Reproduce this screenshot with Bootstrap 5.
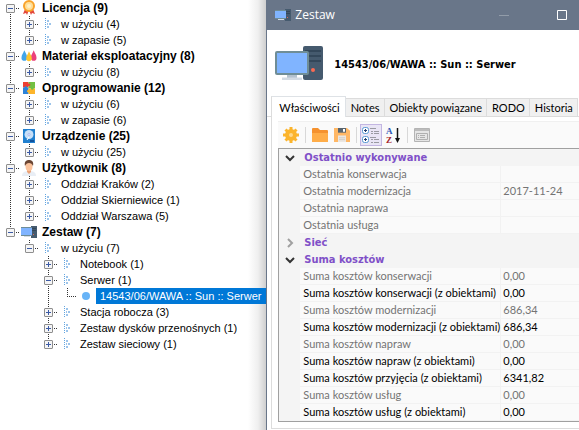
<!DOCTYPE html>
<html lang="pl">
<head>
<meta charset="utf-8">
<meta name="viewport" content="width=device-width, initial-scale=1">
<title>Zestaw</title>
<link href="https://cdn.jsdelivr.net/npm/bootstrap@5.3.0/dist/css/bootstrap.min.css" rel="stylesheet">
<style>
  body { font-family: Lato, "Noto Sans", sans-serif; font-size: 11px; line-height: 16px; color: #000; }
  button { color: inherit; }

  /* tree */
  .tree-pane { flex: 0 0 46%; font-family: "Liberation Sans", Arial, sans-serif; background: linear-gradient(to left, #cfcfcf, #efefef 8px, #fff 18px); }
  .tree-row { display: flex; height: 16px; padding-left: 1px; white-space: nowrap; }
  .tree-group { font-size: 12px; font-weight: 700; }
  .rail { flex: 0 0 19px; display: flex; align-items: center; justify-content: center; background-repeat: no-repeat;
    --v: repeating-linear-gradient(to bottom, #333 0 1px, transparent 1px 2px);
    --h: repeating-linear-gradient(to right, #333 0 1px, transparent 1px 2px); }
  .rail-v { background-image: var(--v); background-size: 1px 100%; background-position: 9px 0; }
  .rail-t { background-image: var(--v), var(--h); background-size: 1px 100%, 10px 1px; background-position: 9px 0, 9px 8px; }
  .rail-l { background-image: var(--v), var(--h); background-size: 1px 8px, 10px 1px; background-position: 9px 0, 9px 8px; }
  .rail-f { background-image: var(--v), var(--h); background-size: 1px 8px, 10px 1px; background-position: 9px 8px, 9px 8px; }
  .toggler { width: 9px; height: 9px; padding: 0; border: 1px solid #8e8e8e; border-radius: 1px; margin-top: 1px;
    background: linear-gradient(#3b5aa5, #3b5aa5) center / 5px 1px no-repeat, #f5f5f5; }
  .toggler[aria-expanded="false"] { background: linear-gradient(#3b5aa5, #3b5aa5) center / 5px 1px no-repeat, linear-gradient(#3b5aa5, #3b5aa5) center / 1px 5px no-repeat, #f5f5f5; }
  .glyph { flex: 0 0 18px; height: 16px; display: flex; align-items: center; justify-content: center; }
  .tree-text { padding-left: 4px; }
  .tree-text.chosen { flex: 1 1 auto; background: #0078d7; color: #fff; margin-left: 1px; overflow: hidden; }

  /* window */
  .win { flex: 1 1 0; min-width: 0; border-left: 1px solid #697689; background: #fff; overflow: hidden; }
  .win-title { background: #697689; color: #fff; height: 30px; padding: 0 12px 0 8px; font: 12px/30px "Open Sans", "Noto Sans", sans-serif; }
  .win-btn { border: 0; padding: 0; background: none; display: flex; }
  .win-head { height: 66px; padding-left: 8px; gap: 11px; }
  .win-head h1 { font: 700 11px/16px "DejaVu Sans Condensed", "DejaVu Sans", sans-serif; margin: 0; padding-top: 4px; white-space: nowrap; }
  .tabs { padding-left: 4px; flex-wrap: nowrap; align-items: flex-end; border-bottom: 1px solid #dcdcdc; height: 21px; }
  .tabs .nav-link { font-size: 11px; line-height: 16px; padding: 1px 4px 0 5px; height: 18px; color: #000; background: #f0f0f0; border: 1px solid #dcdcdc; border-left: 0; border-bottom: 0; border-radius: 0; margin: 0; white-space: nowrap; }
  .tabs .nav-link.active { height: 21px; padding: 2px 5px 0 7px; background: #fff; border-left: 1px solid #dcdcdc; margin-bottom: -1px; }
  .tab-body { margin-left: 4px; border-left: 1px solid #dcdcdc; border-bottom: 1px solid #dcdcdc; padding: 4px 0 6px 6px; }
  .tools { height: 27px; background: #fafafa; border-top: 1px solid #f0f0f0; padding-left: 2px; }
  .tool { border: 1px solid transparent; background: none; padding: 0; width: 22px; height: 22px; display: flex; align-items: center; justify-content: center; }
  .tool.on { background: #e9e5f5; border-color: #c3b6e2; }
  .bar { width: 1px; height: 16px; background: #d8d8d8; margin: 0 3px; }

  /* properties */
  .props { width: 100%; table-layout: fixed; border: 1px solid #a0a0a0; border-right: 0; background: #fafafa; border-collapse: separate; border-spacing: 0; }
  .props th, .props td { height: 17px; padding: 0 0 0 3px; line-height: 16px; border-bottom: 1px solid #f2f2f2; font-weight: 400; white-space: nowrap; }
  .props td { padding-left: 2px; border-left: 1px solid #f2f2f2; }
  .props .edge { background: #f4f4f4; border: 0; padding: 0; }
  .props .sect th { background: #f4f4f4; color: #8050c8; font-weight: 700; font-family: "DejaVu Sans Condensed", "DejaVu Sans", sans-serif; padding: 1px 0 0 4px; border: 0; }
  .props .edge button { border: 0; padding: 0; background: none; display: flex; margin: 0 auto; }
  .ro { color: #747474; }
</style>
<script src="https://cdn.jsdelivr.net/npm/bootstrap@5.3.0/dist/js/bootstrap.bundle.min.js"></script>
</head>
<body>
<svg width="0" height="0" class="d-none" aria-hidden="true">
  <symbol id="branch" viewBox="0 0 8 14"><path fill="#62a5e0" d="M1 1h1v1H1zM1 3h1v1H1zM1 5h1v1H1zM1 7h1v1H1zM1 9h1v1H1zM1 11h1v1H1z"/><path fill="#9cc4ea" d="M3 3h2v2H3zM3 9h2v2H3zM3 6h1v2H3zM5 6h2v2H5z"/></symbol>
  <symbol id="pc" viewBox="0 0 48 34"><rect x="28" width="20" height="34" rx="2" fill="#455a6e"/><path fill="#33475a" d="M30 4h16v2H30zM30 9h16v2H30zM30 14h16v2H30z"/><rect y="5" width="34" height="24" rx="2" fill="#6f8d96"/><rect x="2" y="7" width="30" height="20" fill="#80b4ff"/><path fill="#b4c2cf" d="M12 29h10v3H12z"/><path fill="#d3dbe4" d="M7 31.500h20V34H7z"/><circle cx="38" cy="24" r="2" fill="#fb6a52"/></symbol>
  <symbol id="pc-mini" viewBox="0 0 16 12"><path fill="#455a6e" d="M10 0h6v12h-6z"/><path fill="#33475a" d="M11 2h4v1h-4zM11 4h4v1h-4z"/><path fill="#6f8d96" d="M0 1h11v9H0z"/><path fill="#80b4ff" d="M0 2h11v7H0z"/><path fill="#d3dbe4" d="M3 10h6v1H3z"/><path fill="#d9695c" d="M12 8h1v1h-1z"/></symbol>
</svg>

<main class="d-flex min-vh-100 overflow-hidden">
  <nav class="tree-pane" aria-label="Drzewo zasobów">
    <div class="tree-row tree-group"><span class="rail rail-f"><button class="toggler" aria-expanded="true" aria-label="Licencja"></button></span><span class="glyph"><svg width="14" height="16" viewBox="0 0 14 16"><path d="M3 9 1 14l3-1 1 2 2-5 2 5 1-2 3 1-2-5z" fill="#e2473c"/><circle cx="7" cy="6" r="5" fill="#ffdf98" stroke="#f9a32b" stroke-width="2"/><circle cx="7" cy="6" r="2" fill="#fff0c6"/></svg></span><span class="tree-text">Licencja (9)</span></div>
    <div class="tree-row"><span class="rail rail-v"></span><span class="rail rail-t"><button class="toggler" aria-expanded="false" aria-label="w użyciu"></button></span><span class="glyph"><svg width="8" height="14"><use href="#branch"/></svg></span><span class="tree-text">w użyciu (4)</span></div>
    <div class="tree-row"><span class="rail rail-v"></span><span class="rail rail-l"><button class="toggler" aria-expanded="false" aria-label="w zapasie"></button></span><span class="glyph"><svg width="8" height="14"><use href="#branch"/></svg></span><span class="tree-text">w zapasie (5)</span></div>
    <div class="tree-row tree-group"><span class="rail rail-t"><button class="toggler" aria-expanded="true" aria-label="Materiał eksploatacyjny"></button></span><span class="glyph"><svg width="16" height="12" viewBox="0 0 17 12"><path d="M3.500 0C5 3 6.500 5 6.500 8a3 3 0 0 1-6 0c0-3 2-5 3-8z" fill="#42a5ea"/><path d="M13.500 0c1 3 3 5 3 8a3 3 0 0 1-6 0c0-3 2-5 3-8z" fill="#ec407a"/><path d="M8.500 1c1 3 3 5 3 7.500a3 3 0 0 1-6 0C5.500 6 7.500 4 8.500 1z" fill="#fdc52f"/></svg></span><span class="tree-text">Materiał eksploatacyjny (8)</span></div>
    <div class="tree-row"><span class="rail rail-v"></span><span class="rail rail-l"><button class="toggler" aria-expanded="false" aria-label="w użyciu"></button></span><span class="glyph"><svg width="8" height="14"><use href="#branch"/></svg></span><span class="tree-text">w użyciu (8)</span></div>
    <div class="tree-row tree-group"><span class="rail rail-t"><button class="toggler" aria-expanded="true" aria-label="Oprogramowanie"></button></span><span class="glyph"><svg width="12" height="12" viewBox="0 0 13 13"><path fill="#ed3f32" d="M0 0h6v6H0z"/><path fill="#72c043" d="M6 0h7v7H6z"/><path fill="#2c83d9" d="M0 6h6v7H0z"/><path fill="#fdb52b" d="M6 7h7v6H6z"/><circle cx="6.500" cy="3" r="1.500" fill="#ed3f32"/><circle cx="10" cy="7" r="1.500" fill="#72c043"/><circle cx="6" cy="10" r="1.500" fill="#fdb52b"/><circle cx="3" cy="6" r="1.500" fill="#2c83d9"/></svg></span><span class="tree-text">Oprogramowanie (12)</span></div>
    <div class="tree-row"><span class="rail rail-v"></span><span class="rail rail-t"><button class="toggler" aria-expanded="false" aria-label="w użyciu"></button></span><span class="glyph"><svg width="8" height="14"><use href="#branch"/></svg></span><span class="tree-text">w użyciu (6)</span></div>
    <div class="tree-row"><span class="rail rail-v"></span><span class="rail rail-l"><button class="toggler" aria-expanded="false" aria-label="w zapasie"></button></span><span class="glyph"><svg width="8" height="14"><use href="#branch"/></svg></span><span class="tree-text">w zapasie (6)</span></div>
    <div class="tree-row tree-group"><span class="rail rail-t"><button class="toggler" aria-expanded="true" aria-label="Urządzenie"></button></span><span class="glyph"><svg width="12" height="14" viewBox="0 0 12 14"><rect width="12" height="14" fill="#2180cf"/><circle cx="6" cy="5.500" r="4.500" fill="#c8e0f8"/><circle cx="6" cy="5.500" r="1" fill="#fff" stroke="#a9b5ee"/><path d="M4 11 6 8" stroke="#fff"/><path fill="#10529b" d="M7 11h4v2H7z"/></svg></span><span class="tree-text">Urządzenie (25)</span></div>
    <div class="tree-row"><span class="rail rail-v"></span><span class="rail rail-l"><button class="toggler" aria-expanded="false" aria-label="w użyciu"></button></span><span class="glyph"><svg width="8" height="14"><use href="#branch"/></svg></span><span class="tree-text">w użyciu (25)</span></div>
    <div class="tree-row tree-group"><span class="rail rail-t"><button class="toggler" aria-expanded="true" aria-label="Użytkownik"></button></span><span class="glyph"><svg width="14" height="16" viewBox="0 0 14 16"><path d="M0 16c0-4 3-5 7-5s7 1 7 5z" fill="#e9eef5"/><path d="M5 9h4v3l-2 2-2-2z" fill="#eba276"/><ellipse cx="7" cy="6.500" rx="3.500" ry="4.500" fill="#fbc29b"/><path d="M3 6c-1-4 1-6 4-6s5 2 4 6c-1-2-2-3-4-3S4 4 3 6z" fill="#6b4532"/></svg></span><span class="tree-text">Użytkownik (8)</span></div>
    <div class="tree-row"><span class="rail rail-v"></span><span class="rail rail-t"><button class="toggler" aria-expanded="false" aria-label="Oddział Kraków"></button></span><span class="glyph"><svg width="8" height="14"><use href="#branch"/></svg></span><span class="tree-text">Oddział Kraków (2)</span></div>
    <div class="tree-row"><span class="rail rail-v"></span><span class="rail rail-t"><button class="toggler" aria-expanded="false" aria-label="Oddział Skierniewice"></button></span><span class="glyph"><svg width="8" height="14"><use href="#branch"/></svg></span><span class="tree-text">Oddział Skierniewice (1)</span></div>
    <div class="tree-row"><span class="rail rail-v"></span><span class="rail rail-l"><button class="toggler" aria-expanded="false" aria-label="Oddział Warszawa"></button></span><span class="glyph"><svg width="8" height="14"><use href="#branch"/></svg></span><span class="tree-text">Oddział Warszawa (5)</span></div>
    <div class="tree-row tree-group"><span class="rail rail-l"><button class="toggler" aria-expanded="true" aria-label="Zestaw"></button></span><span class="glyph"><svg width="16" height="12"><use href="#pc-mini"/></svg></span><span class="tree-text">Zestaw (7)</span></div>
    <div class="tree-row"><span class="rail"></span><span class="rail rail-l"><button class="toggler" aria-expanded="true" aria-label="w użyciu"></button></span><span class="glyph"><svg width="8" height="14"><use href="#branch"/></svg></span><span class="tree-text">w użyciu (7)</span></div>
    <div class="tree-row"><span class="rail"></span><span class="rail"></span><span class="rail rail-t"><button class="toggler" aria-expanded="false" aria-label="Notebook"></button></span><span class="glyph"><svg width="8" height="14"><use href="#branch"/></svg></span><span class="tree-text">Notebook (1)</span></div>
    <div class="tree-row"><span class="rail"></span><span class="rail"></span><span class="rail rail-t"><button class="toggler" aria-expanded="true" aria-label="Serwer"></button></span><span class="glyph"><svg width="8" height="14"><use href="#branch"/></svg></span><span class="tree-text">Serwer (1)</span></div>
    <div class="tree-row"><span class="rail"></span><span class="rail"></span><span class="rail rail-v"></span><span class="rail rail-l"></span><span class="glyph"><svg width="8" height="8" viewBox="0 0 8 8"><circle cx="4" cy="4" r="4" fill="#68b4f7"/></svg></span><span class="tree-text chosen">14543/06/WAWA :: Sun :: Serwer</span></div>
    <div class="tree-row"><span class="rail"></span><span class="rail"></span><span class="rail rail-t"><button class="toggler" aria-expanded="false" aria-label="Stacja robocza"></button></span><span class="glyph"><svg width="8" height="14"><use href="#branch"/></svg></span><span class="tree-text">Stacja robocza (3)</span></div>
    <div class="tree-row"><span class="rail"></span><span class="rail"></span><span class="rail rail-t"><button class="toggler" aria-expanded="false" aria-label="Zestaw dysków przenośnych"></button></span><span class="glyph"><svg width="8" height="14"><use href="#branch"/></svg></span><span class="tree-text">Zestaw dysków przenośnych (1)</span></div>
    <div class="tree-row"><span class="rail"></span><span class="rail"></span><span class="rail rail-l"><button class="toggler" aria-expanded="false" aria-label="Zestaw sieciowy"></button></span><span class="glyph"><svg width="8" height="14"><use href="#branch"/></svg></span><span class="tree-text">Zestaw sieciowy (1)</span></div>
  </nav>

  <section class="win">
    <header class="win-title d-flex align-items-center">
      <svg width="16" height="12"><use href="#pc-mini"/></svg>
      <span class="ms-1 me-auto">Zestaw</span>
      <button class="win-btn me-5" aria-label="Minimalizuj" disabled><svg width="10" height="10" viewBox="0 0 10 10"><path stroke="#929ca9" d="M0 5.500h10"/></svg></button>
      <button class="win-btn" aria-label="Maksymalizuj"><svg width="10" height="10" viewBox="0 0 10 10"><path fill="none" stroke="#fff" d="M.5.5h9v9h-9z"/></svg></button>
    </header>
    <div class="win-head d-flex align-items-center">
      <svg width="48" height="34" class="flex-shrink-0"><use href="#pc"/></svg>
      <h1>14543/06/WAWA :: Sun :: Serwer</h1>
    </div>
    <div class="nav nav-tabs tabs" role="tablist">
      <button class="nav-link active" role="tab" aria-selected="true">Właściwości</button>
      <button class="nav-link" role="tab">Notes</button>
      <button class="nav-link" role="tab">Obiekty powiązane</button>
      <button class="nav-link" role="tab">RODO</button>
      <button class="nav-link" role="tab">Historia</button>
    </div>
    <div class="tab-body">
      <div class="tools d-flex align-items-center">
        <button class="tool" aria-label="Ustawienia"><svg width="16" height="16" viewBox="0 0 16 16"><path stroke="#fbb42c" stroke-width="3" d="M8 0v16M0 8h16M2.500 2.500l11 11M13.500 2.500l-11 11"/><circle cx="8" cy="8" r="4" fill="#ffd88a" stroke="#fbb42c" stroke-width="4"/></svg></button>
        <span class="bar"></span>
        <button class="tool" aria-label="Otwórz"><svg width="16" height="14" viewBox="0 0 16 14"><path d="M0 1q0-1 1-1h5l2 2h7q1 0 1 1v10q0 1-1 1H1q-1 0-1-1z" fill="#f5922f"/><path d="M0 5h16v8q0 1-1 1H1q-1 0-1-1z" fill="#ffad48"/></svg></button>
        <button class="tool" aria-label="Zapisz"><svg width="16" height="14" viewBox="0 0 16 15" preserveAspectRatio="none"><path d="M0 0h13l3 3v12H0z" fill="#ffb765"/><path fill="#59656f" d="M4 0h8v5H4z"/><path fill="#fff" d="M9 1h2v3H9z"/><path fill="#ebe7e2" d="M4 8h8v7H4z"/><path stroke="#cfcac4" d="M5 10.500h6M5 12.500h6"/></svg></button>
        <span class="bar"></span>
        <button class="tool on" aria-label="Kategorie" aria-pressed="true"><svg width="18" height="18" viewBox="0 0 18 18"><g fill="#fff" stroke="#5b9bd5"><rect x=".5" y="1.500" width="6" height="6" rx="2"/><rect x=".5" y="10.500" width="6" height="6" rx="2"/></g><path stroke="#233f70" d="M2 4.500h3M3.500 3v3M2 13.500h3M3.500 12v3"/><path stroke="#9a9aa2" d="M8 2.500h6M9 5.500h2M12 5.500h5M9 7.500h2M12 7.500h5M8 11.500h6M9 13.500h2M12 13.500h5M9 16.500h2M12 16.500h5"/></svg></button>
        <button class="tool" aria-label="Sortuj alfabetycznie"><svg width="18" height="18" viewBox="0 0 18 18" font-family="Liberation Serif, serif" font-weight="700" font-size="9"><text x="2" y="8" fill="#2b55b5">A</text><text x="2" y="17" fill="#a5252b">Z</text><path d="M13.500 2v11" stroke="#111" stroke-width="1.500"/><path d="M11 12h5l-2.500 5z" fill="#111"/></svg></button>
        <span class="bar"></span>
        <button class="tool" aria-label="Strony właściwości" disabled><svg width="16" height="14" viewBox="0 0 16 14"><path d="M.5.5h15v13H.5z" fill="#e6e6e6" stroke="#b4b4b4"/><path fill="#bcbcbc" d="M1 1h14v2H1z"/><path fill="none" stroke="#b0b0b0" d="M2.500 5.500h11v6h-11zM4 7.500h1M6 7.500h5M4 9.500h1M6 9.500h5"/></svg></button>
      </div>
      <table class="props">
        <colgroup><col style="width:21px"><col style="width:200px"><col></colgroup>
        <tbody>
          <tr class="sect"><td class="edge"><button aria-label="Zwiń"><svg width="10" height="8" viewBox="0 0 10 8"><path d="m1 2 4 4 4-4" fill="none" stroke="#333" stroke-width="2"/></svg></button></td><th colspan="2">Ostatnio wykonywane</th></tr>
          <tr class="ro"><td class="edge"></td><th>Ostatnia konserwacja</th><td></td></tr>
          <tr class="ro"><td class="edge"></td><th>Ostatnia modernizacja</th><td>2017-11-24</td></tr>
          <tr class="ro"><td class="edge"></td><th>Ostatnia naprawa</th><td></td></tr>
          <tr class="ro"><td class="edge"></td><th>Ostatnia usługa</th><td></td></tr>
          <tr class="sect"><td class="edge"><button aria-label="Rozwiń"><svg width="8" height="10" viewBox="0 0 8 10"><path d="m2 1 4 4-4 4" fill="none" stroke="#a0a0a0" stroke-width="2"/></svg></button></td><th colspan="2">Sieć</th></tr>
          <tr class="sect"><td class="edge"><button aria-label="Zwiń"><svg width="10" height="8" viewBox="0 0 10 8"><path d="m1 2 4 4 4-4" fill="none" stroke="#333" stroke-width="2"/></svg></button></td><th colspan="2">Suma kosztów</th></tr>
          <tr class="ro"><td class="edge"></td><th>Suma kosztów konserwacji</th><td>0,00</td></tr>
          <tr><td class="edge"></td><th>Suma kosztów konserwacji (z obiektami)</th><td>0,00</td></tr>
          <tr class="ro"><td class="edge"></td><th>Suma kosztów modernizacji</th><td>686,34</td></tr>
          <tr><td class="edge"></td><th>Suma kosztów modernizacji (z obiektami)</th><td>686,34</td></tr>
          <tr class="ro"><td class="edge"></td><th>Suma kosztów napraw</th><td>0,00</td></tr>
          <tr><td class="edge"></td><th>Suma kosztów napraw (z obiektami)</th><td>0,00</td></tr>
          <tr><td class="edge"></td><th>Suma kosztów przyjęcia (z obiektami)</th><td>6341,82</td></tr>
          <tr class="ro"><td class="edge"></td><th>Suma kosztów usług</th><td>0,00</td></tr>
          <tr><td class="edge"></td><th>Suma kosztów usług (z obiektami)</th><td>0,00</td></tr>
        </tbody>
      </table>
    </div>
  </section>
</main>
</body>
</html>
